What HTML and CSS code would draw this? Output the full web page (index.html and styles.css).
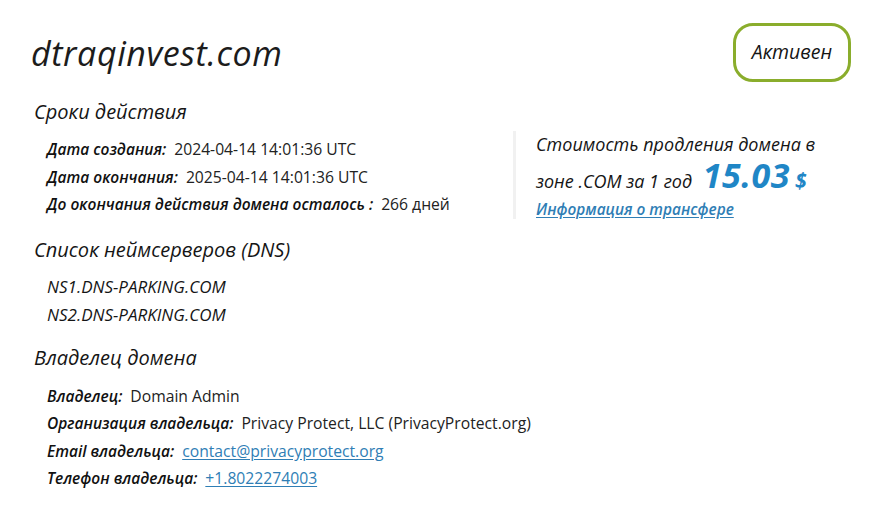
FILE: index.html
```html
<!DOCTYPE html>
<html lang="ru">
<head>
<meta charset="utf-8">
<title>dtraqinvest.com</title>
<link rel="stylesheet" href="styles.css">
</head>
<body>
<main class="card">
  <header class="head">
    <h1 class="domain">dtraqinvest.com</h1>
    <div class="status">Активен</div>
  </header>

  <h2 class="sec sec-first">Сроки действия</h2>
  <div class="terms">
    <ul class="rows">
      <li><span class="lbl">Дата создания:</span> <span class="val">2024-04-14 14:01:36 UTC</span></li>
      <li><span class="lbl">Дата окончания:</span> <span class="val">2025-04-14 14:01:36 UTC</span></li>
      <li><span class="lbl">До окончания действия домена осталось :</span> <span class="val">266 дней</span></li>
    </ul>
    <div class="price">
      <div class="price-text">Стоимость продления домена в</div>
      <div class="price-text">зоне .COM за 1 год <span class="amount">15.03</span><span class="cur">$</span></div>
      <a class="transfer" href="#">Информация о трансфере</a>
    </div>
  </div>

  <h2 class="sec">Список неймсерверов (DNS)</h2>
  <ul class="ns">
    <li>NS1.DNS-PARKING.COM</li>
    <li>NS2.DNS-PARKING.COM</li>
  </ul>

  <h2 class="sec sec-owner">Владелец домена</h2>
  <ul class="rows owner">
    <li><span class="lbl">Владелец:</span> <span class="val">Domain Admin</span></li>
    <li><span class="lbl">Организация владельца:</span> <span class="val">Privacy Protect, LLC (PrivacyProtect.org)</span></li>
    <li><span class="lbl">Email владельца:</span> <a class="val link" href="#">contact@privacyprotect.org</a></li>
    <li><span class="lbl">Телефон владельца:</span> <a class="val link" href="#">+1.8022274003</a></li>
  </ul>
</main>
</body>
</html>
```

FILE: styles.css
```css
* { box-sizing: border-box; }
html, body { margin: 0; padding: 0; background: #ffffff; }
body {
  font-family: "Open Sans", "Noto Sans", "DejaVu Sans", sans-serif;
  color: #1a1a1a;
}
.card {
  width: 879px;
  padding: 23px 28px 0 31px;
}
.head {
  display: flex;
  justify-content: space-between;
  align-items: center;
  height: 59px;
}
.domain {
  margin: 0;
  font-size: 34px;
  font-style: italic;
  font-weight: 500;
  letter-spacing: 0.6px;
  color: #1c1c1c;
  line-height: 40px;
}
.status {
  width: 118px;
  height: 59px;
  border: 3px solid #8aad2c;
  border-radius: 20px;
  display: flex;
  align-items: center;
  justify-content: center;
  font-size: 19.5px;
  font-style: italic;
  color: #151515;
  padding-bottom: 2px;
}
.sec {
  margin: 0;
  margin-top: 19px;
  font-size: 20px;
  font-style: italic;
  font-weight: 400;
  line-height: 24px;
  padding-left: 3px;
  color: #151515;
}
.sec-first { margin-top: 18px; }
.sec-owner { margin-top: 17px; }
.terms {
  display: flex;
  align-items: flex-start;
  margin-top: 12px;
}
.rows {
  list-style: none;
  margin: 0;
  padding: 0 0 0 16px;
  font-size: 15.5px;
  line-height: 27.5px;
}
.terms .rows { flex: 0 0 482px; }
.owner { margin-top: 13px; line-height: 27.3px; }
.lbl {
  font-style: italic;
  font-weight: 600;
  color: #111;
  margin-right: 4px;
}
.val {
  font-size: 15.7px;
  font-weight: 400;
  color: #222;
}
.link, .transfer {
  color: #2f7eb5;
  text-decoration: underline;
  text-underline-offset: 2px;
}
.price {
  border-left: 3px solid #f1f1f1;
  padding-left: 20px;
  margin-top: -5px;
  height: 88px;
  font-style: italic;
  font-size: 18px;
  color: #151515;
}
.price-text { line-height: 31px; white-space: nowrap; }
.price-text:first-child { margin-top: -2px; }
.amount {
  font-size: 34px;
  font-weight: 700;
  color: #1f86c6;
  margin-left: 6px;
  letter-spacing: 0.5px;
  line-height: 31px;
}
.cur {
  font-size: 21px;
  font-weight: 700;
  color: #1f86c6;
  margin-left: 5px;
}
.transfer {
  display: block;
  line-height: 26px;
  font-size: 15.4px;
  font-weight: 600;
}
.ns {
  list-style: none;
  margin: 11px 0 0 0;
  padding: 0 0 0 16px;
  font-size: 17px;
  font-style: italic;
  line-height: 28px;
  color: #151515;
}
```
